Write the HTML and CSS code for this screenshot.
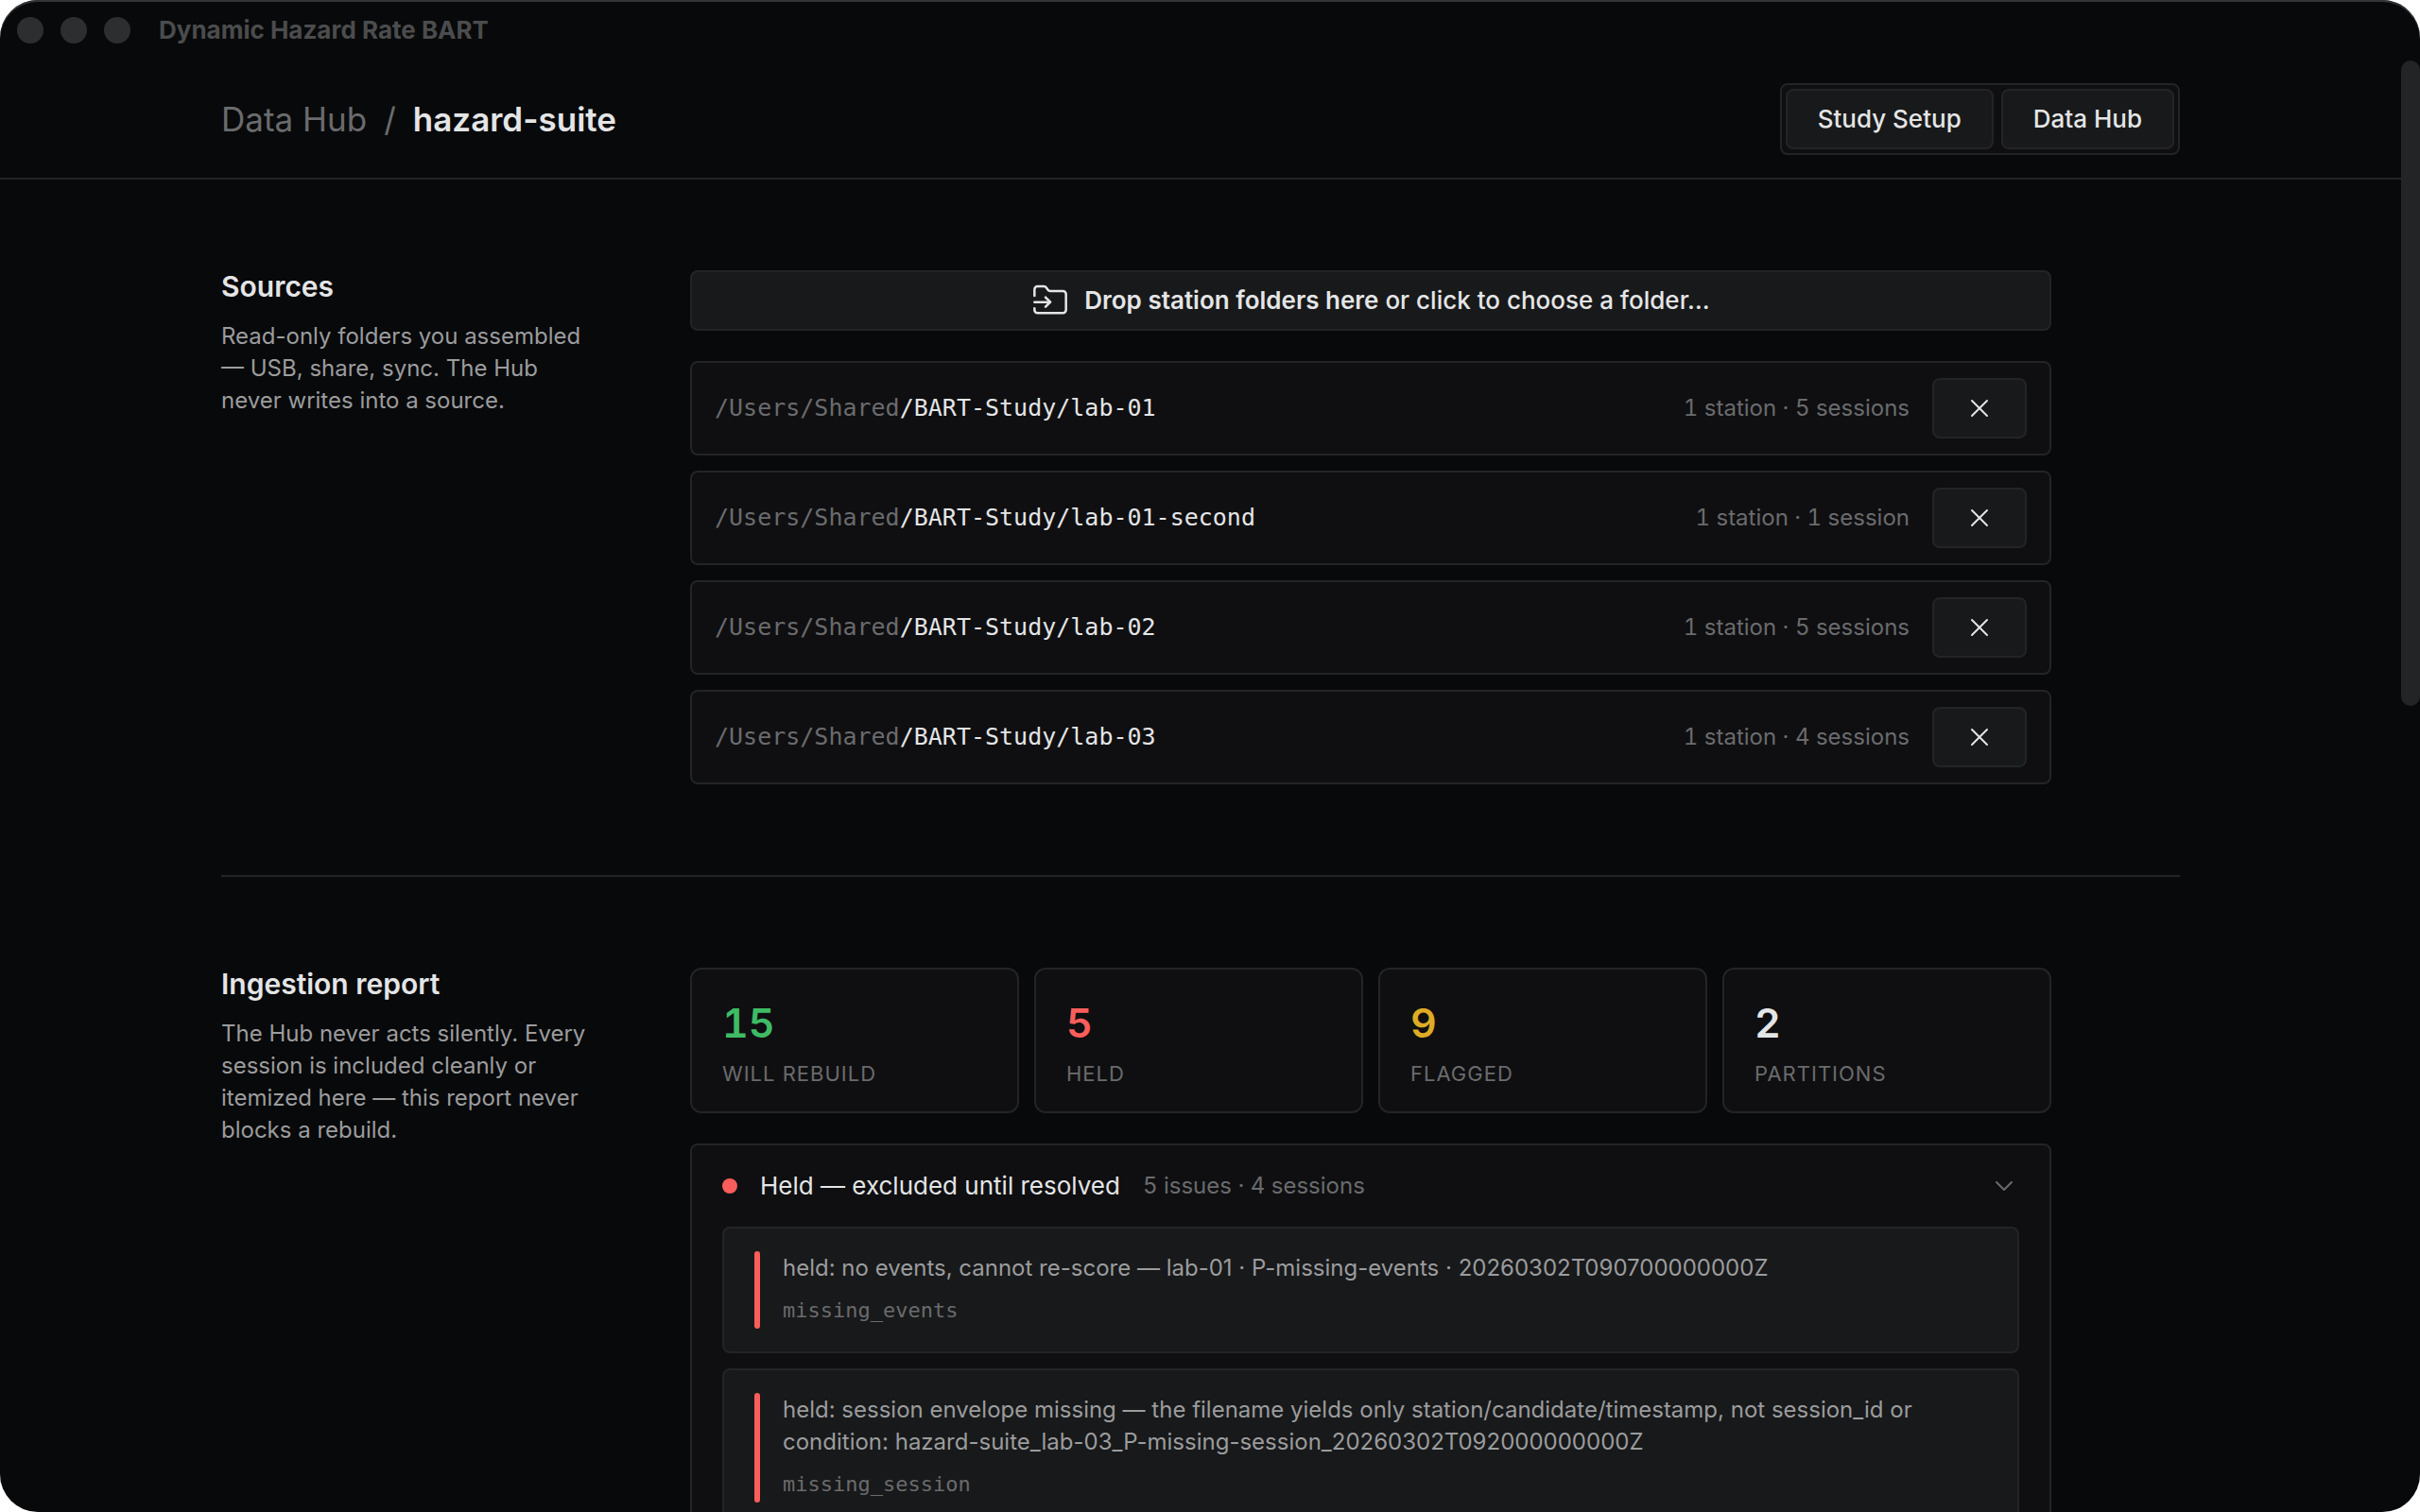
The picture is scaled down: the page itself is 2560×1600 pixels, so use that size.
FILE: index.html
```
<!DOCTYPE html>
<html lang="en">
<head>
    <meta charset="UTF-8">
    <meta name="viewport" content="width=device-width, initial-scale=1.0">
    <title>Dynamic Hazard Rate BART</title>
    <link rel="stylesheet" href="styles.css">
</head>
<body>

    <!-- Icons shared by the buttons below -->
    <svg class="sprite" aria-hidden="true">
        <symbol id="icon-folder-input" viewBox="0 0 24 24">
            <path d="M2 9V5a2 2 0 0 1 2-2h3.9a2 2 0 0 1 1.69.9l.81 1.2a2 2 0 0 0 1.67.9H20a2 2 0 0 1 2 2v10a2 2 0 0 1-2 2H4a2 2 0 0 1-2-2v-1"/>
            <path d="M2 13h10"/>
            <path d="m9 16 3-3-3-3"/>
        </symbol>
        <symbol id="icon-x" viewBox="0 0 24 24">
            <path d="M18 6 6 18"/>
            <path d="m6 6 12 12"/>
        </symbol>
        <symbol id="icon-chevron" viewBox="0 0 24 24">
            <path d="m6 9 6 6 6-6"/>
        </symbol>
    </svg>

    <div class="window">
        <div class="titlebar">
            <div class="lights">
                <span class="light"></span>
                <span class="light"></span>
                <span class="light"></span>
            </div>
            <span class="window-title">Dynamic Hazard Rate BART</span>
        </div>

        <div class="view">
            <div class="page">
                <header class="topbar">
                    <div class="container topbar-inner">
                        <h1 class="breadcrumb">
                            <span>Data Hub</span>
                            <span>/</span>
                            <span class="current">hazard-suite</span>
                        </h1>
                        <nav class="switcher">
                            <button type="button" class="btn">Study Setup</button>
                            <button type="button" class="btn">Data Hub</button>
                        </nav>
                    </div>
                </header>

                <main class="container">
                    <section class="section">
                        <div class="intro">
                            <h2>Sources</h2>
                            <p>Read-only folders you assembled — USB, share, sync. The Hub never writes into a source.</p>
                        </div>
                        <div class="content">
                            <button type="button" class="btn drop">
                                <svg class="icon icon-lg"><use href="#icon-folder-input"/></svg>
                                <span><strong>Drop station folders here</strong> or click to choose a folder…</span>
                            </button>
                            <ul class="sources">
                                <li class="source">
                                    <span class="path"><span class="root">/Users/Shared</span>/BART-Study/lab-01</span>
                                    <span class="count">1 station · 5 sessions</span>
                                    <button type="button" class="btn" aria-label="Remove lab-01"><svg class="icon"><use href="#icon-x"/></svg></button>
                                </li>
                                <li class="source">
                                    <span class="path"><span class="root">/Users/Shared</span>/BART-Study/lab-01-second</span>
                                    <span class="count">1 station · 1 session</span>
                                    <button type="button" class="btn" aria-label="Remove lab-01-second"><svg class="icon"><use href="#icon-x"/></svg></button>
                                </li>
                                <li class="source">
                                    <span class="path"><span class="root">/Users/Shared</span>/BART-Study/lab-02</span>
                                    <span class="count">1 station · 5 sessions</span>
                                    <button type="button" class="btn" aria-label="Remove lab-02"><svg class="icon"><use href="#icon-x"/></svg></button>
                                </li>
                                <li class="source">
                                    <span class="path"><span class="root">/Users/Shared</span>/BART-Study/lab-03</span>
                                    <span class="count">1 station · 4 sessions</span>
                                    <button type="button" class="btn" aria-label="Remove lab-03"><svg class="icon"><use href="#icon-x"/></svg></button>
                                </li>
                            </ul>
                        </div>
                    </section>

                    <section class="section">
                        <div class="intro">
                            <h2>Ingestion report</h2>
                            <p>The Hub never acts silently. Every session is included cleanly or itemized here — this report never blocks a rebuild.</p>
                        </div>
                        <div class="content">
                            <div class="stats">
                                <div class="stat">
                                    <span class="value good">15</span>
                                    <span class="label">Will rebuild</span>
                                </div>
                                <div class="stat">
                                    <span class="value bad">5</span>
                                    <span class="label">Held</span>
                                </div>
                                <div class="stat">
                                    <span class="value warn">9</span>
                                    <span class="label">Flagged</span>
                                </div>
                                <div class="stat">
                                    <span class="value">2</span>
                                    <span class="label">Partitions</span>
                                </div>
                            </div>

                            <div class="group">
                                <button type="button" class="group-head" aria-expanded="true">
                                    <span class="dot"></span>
                                    <span>Held — excluded until resolved</span>
                                    <span class="count">5 issues · 4 sessions</span>
                                    <svg class="icon chevron"><use href="#icon-chevron"/></svg>
                                </button>
                                <div class="issues">
                                    <article class="issue">
                                        <div class="issue-body">
                                            <p>held: no events, cannot re-score — lab-01 · P-missing-events · 20260302T090700000000Z</p>
                                            <code>missing_events</code>
                                        </div>
                                    </article>
                                    <article class="issue">
                                        <div class="issue-body">
                                            <p>held: session envelope missing — the filename yields only station/candidate/timestamp, not session_id or condition: hazard-suite_lab-03_P-missing-session_20260302T092000000000Z</p>
                                            <code>missing_session</code>
                                        </div>
                                    </article>
                                </div>
                            </div>
                        </div>
                    </section>
                </main>
            </div>
            <div class="scrollbar"><div class="thumb"></div></div>
        </div>
    </div>

</body>
</html>
```

FILE: styles.css
```
:root {
    --bg: #08090a;
    --panel: #0f0f11;
    --raised: #18191a;
    --border: #232426;
    --text: #e4e5e6;
    --text-soft: #9b9c9e;
    --text-dim: #6a6b6d;
    --green: #3fbb65;
    --red: #fa5e5a;
    --yellow: #dfab25;
    --sans: Inter, "Liberation Sans", sans-serif;
    --mono: "DejaVu Sans Mono", monospace;
}

* {
    margin: 0;
    padding: 0;
    box-sizing: border-box;
}

body {
    background: #fff;
    color: var(--text);
    font-family: var(--sans);
    font-size: 26px;
    line-height: 36px;
}

.sprite {
    display: none;
}

.window {
    display: flex;
    flex-direction: column;
    height: 100vh;
    overflow: hidden;
    background: var(--bg);
    border-radius: 40px;
    box-shadow: inset 0 2px 0 #343536;
}

/* Title bar */
.titlebar {
    display: flex;
    align-items: center;
    gap: 30px;
    flex: none;
    height: 64px;
    padding: 0 18px;
}

.lights {
    display: flex;
    gap: 18px;
}

.light {
    width: 28px;
    height: 28px;
    border-radius: 50%;
    background: #2d2e2f;
}

.window-title {
    color: #4b4c4d;
    font-weight: 700;
}

/* Scrolling area */
.view {
    display: flex;
    flex: 1;
    min-height: 0;
}

.page {
    flex: 1;
    overflow: hidden;
}

.scrollbar {
    flex: none;
    width: 20px;
}

.thumb {
    height: 683px;
    border-radius: 10px;
    background: var(--border);
}

.container {
    max-width: 2072px;
    margin: 0 auto;
}

/* Header */
.topbar {
    padding: 24px 0;
    border-bottom: 2px solid var(--border);
}

.topbar-inner {
    display: flex;
    align-items: center;
    justify-content: space-between;
}

.breadcrumb {
    display: flex;
    gap: 18px;
    color: var(--text-dim);
    font-size: 35px;
    font-weight: 400;
    line-height: 44px;
}

.breadcrumb .current {
    color: var(--text);
    font-weight: 600;
}

.switcher {
    display: flex;
    gap: 8px;
    padding: 4px;
    background: var(--panel);
    border: 2px solid var(--border);
    border-radius: 8px;
}

.btn {
    display: flex;
    align-items: center;
    justify-content: center;
    height: 64px;
    padding: 0 32px;
    background: var(--raised);
    border: 2px solid var(--border);
    border-radius: 8px;
    color: var(--text);
    font: 500 26px/36px var(--sans);
    cursor: pointer;
}

.icon {
    flex: none;
    width: 32px;
    height: 32px;
    fill: none;
    stroke: currentColor;
    stroke-width: 1.5;
    stroke-linecap: round;
    stroke-linejoin: round;
}

.icon-lg {
    width: 40px;
    height: 40px;
}

/* Sections */
.section {
    display: grid;
    grid-template-columns: 400px minmax(0, 1440px);
    gap: 96px;
    padding: 96px 0;
}

.section + .section {
    border-top: 2px solid var(--border);
}

.intro h2 {
    margin-bottom: 19px;
    font-size: 30px;
    font-weight: 600;
    line-height: 34px;
}

.intro p,
.issue p {
    color: var(--text-soft);
    font-size: 24px;
    line-height: 34px;
}

.content {
    display: flex;
    flex-direction: column;
    gap: 32px;
}

.drop {
    gap: 16px;
}

.drop strong {
    font-weight: 600;
}

/* Source folders */
.sources {
    display: flex;
    flex-direction: column;
    gap: 16px;
    list-style: none;
}

.source {
    display: flex;
    align-items: center;
    gap: 24px;
    padding: 16px 24px;
    background: var(--panel);
    border: 2px solid var(--border);
    border-radius: 8px;
}

.path {
    flex: 1;
    font-family: var(--mono);
    font-size: 25px;
}

.root {
    color: var(--text-dim);
}

.count {
    color: var(--text-dim);
    font-size: 24px;
    font-variant-numeric: tabular-nums;
}

/* Totals */
.stats {
    display: grid;
    grid-template-columns: repeat(4, 1fr);
    gap: 16px;
}

.stat {
    display: flex;
    flex-direction: column;
    gap: 6px;
    padding: 24px 32px;
    background: var(--panel);
    border: 2px solid var(--border);
    border-radius: 12px;
}

.value {
    font-size: 43px;
    font-weight: 600;
    line-height: 64px;
    font-variant-numeric: tabular-nums;
}

.good {
    color: var(--green);
}

.bad {
    color: var(--red);
}

.warn {
    color: var(--yellow);
}

.label {
    color: var(--text-dim);
    font-size: 22px;
    line-height: 32px;
    letter-spacing: 1px;
    text-transform: uppercase;
}

/* Issue list */
.group {
    background: var(--panel);
    border: 2px solid var(--border);
    border-radius: 8px;
}

.group-head {
    display: flex;
    align-items: center;
    gap: 24px;
    width: 100%;
    padding: 25px 32px;
    background: none;
    border: none;
    color: var(--text);
    font: 400 26px/36px var(--sans);
    cursor: pointer;
}

.dot {
    width: 16px;
    height: 16px;
    border-radius: 50%;
    background: var(--red);
}

.chevron {
    margin-left: auto;
    color: var(--text-dim);
}

.issues {
    display: flex;
    flex-direction: column;
    gap: 16px;
    padding: 0 32px 32px;
}

.issue {
    display: flex;
    gap: 24px;
    padding: 24px 32px;
    background: var(--raised);
    border: 2px solid var(--border);
    border-radius: 8px;
}

.issue::before {
    content: "";
    flex: none;
    width: 6px;
    border-radius: 3px;
    background: var(--red);
}

.issue-body {
    display: flex;
    flex-direction: column;
    gap: 10px;
    padding: 1px 0;
}

.issue code {
    color: var(--text-dim);
    font-family: var(--mono);
    font-size: 22px;
    line-height: 36px;
}
```
